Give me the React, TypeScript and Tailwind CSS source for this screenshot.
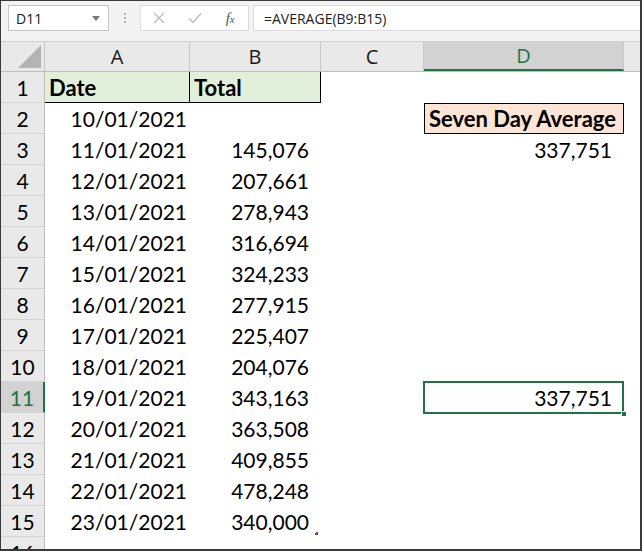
import React from "react";

const rows: { n: number; a: string; b: string; d?: string; dStyle?: "head" | "val" | "sel" }[] = [
  { n: 2, a: "10/01/2021", b: "", d: "Seven Day Average", dStyle: "head" },
  { n: 3, a: "11/01/2021", b: "145,076", d: "337,751", dStyle: "val" },
  { n: 4, a: "12/01/2021", b: "207,661" },
  { n: 5, a: "13/01/2021", b: "278,943" },
  { n: 6, a: "14/01/2021", b: "316,694" },
  { n: 7, a: "15/01/2021", b: "324,233" },
  { n: 8, a: "16/01/2021", b: "277,915" },
  { n: 9, a: "17/01/2021", b: "225,407" },
  { n: 10, a: "18/01/2021", b: "204,076" },
  { n: 11, a: "19/01/2021", b: "343,163", d: "337,751", dStyle: "sel" },
  { n: 12, a: "20/01/2021", b: "363,508" },
  { n: 13, a: "21/01/2021", b: "409,855" },
  { n: 14, a: "22/01/2021", b: "478,248" },
  { n: 15, a: "23/01/2021", b: "340,000" },
];

const cal = { fontFamily: "Lato, 'Noto Sans', sans-serif" };
const ui = { fontFamily: "'Open Sans', 'Noto Sans', sans-serif" };

function RowHead({ n, sel }: { n: number; sel?: boolean }) {
  return (
    <div
      className={
        "w-[44px] shrink-0 h-full flex items-center justify-center border-b border-[#d4d4d4] " +
        (sel
          ? "bg-[#d2d2d2] text-[#217346] border-r-2 border-r-[#217346]"
          : "bg-[#e9e9e9] text-black border-r border-r-[#bdbdbd]")
      }
    >
      <span className="text-[21px] leading-none" style={cal}>{n}</span>
    </div>
  );
}

export default function App() {
  return (
    <div className="w-[642px] h-[551px] bg-white border border-[#3a3a3a] border-r-2 border-b-2 overflow-hidden flex flex-col">
      {/* formula bar */}
      <div className="h-[41px] shrink-0 bg-[#f3f3f3] flex items-start pt-[4px] pl-[7px] border-b border-[#d0d0d0]">
        <div className="w-[101px] h-[26px] bg-white border border-[#c6c6c6] flex items-center justify-between pl-[7px] pr-[8px]">
          <span className="text-[14px] text-[#222]" style={ui}>D11</span>
          <svg width="8" height="5" viewBox="0 0 8 5"><path d="M0 0 L8 0 L4 5 Z" fill="#777" /></svg>
        </div>
        <div className="w-[31px] h-[26px] flex flex-col items-center justify-center gap-[2px]">
          <span className="w-[2px] h-[2px] bg-[#b0b0b0]" />
          <span className="w-[2px] h-[2px] bg-[#b0b0b0]" />
          <span className="w-[2px] h-[2px] bg-[#b0b0b0]" />
        </div>
        <div className="w-[109px] h-[26px] bg-white border border-[#dcdcdc] flex items-center">
          <div className="w-[36px] flex justify-center">
            <svg width="12" height="12" viewBox="0 0 12 12"><path d="M1 1 L11 11 M11 1 L1 11" stroke="#bdbdbd" strokeWidth="1.4" /></svg>
          </div>
          <div className="w-[36px] flex justify-center">
            <svg width="14" height="12" viewBox="0 0 14 12"><path d="M1 6.5 L5 10.5 L13 1.5" stroke="#bdbdbd" strokeWidth="1.5" fill="none" /></svg>
          </div>
          <div className="w-[36px] flex justify-center">
            <span className="text-[15px] italic text-[#555]" style={{ fontFamily: "'Liberation Serif', serif" }}>f<span className="text-[11px]">x</span></span>
          </div>
        </div>
        <div className="flex-1 h-[26px] ml-[4px] bg-white border border-[#dcdcdc] border-r-0 flex items-center pl-[10px]">
          <span className="text-[14px] text-[#222]" style={ui}>=AVERAGE(B9:B15)</span>
        </div>
      </div>

      {/* column header */}
      <div className="h-[30px] shrink-0 flex bg-[#e9e9e9] border-b border-[#bdbdbd]">
        <div className="w-[44px] shrink-0 border-r border-[#c8c8c8] flex items-end justify-end pr-[3px] pb-[3px]">
          <svg width="23" height="23" viewBox="0 0 23 23"><path d="M23 0 L23 23 L0 23 Z" fill="#b4b4b4" /></svg>
        </div>
        <div className="w-[145px] shrink-0 border-r border-[#c8c8c8] flex items-center justify-center text-[20px] text-[#1a1a1a]" style={ui}>A</div>
        <div className="w-[131px] shrink-0 border-r border-[#c8c8c8] flex items-center justify-center text-[20px] text-[#1a1a1a]" style={ui}>B</div>
        <div className="w-[103px] shrink-0 border-r border-[#c8c8c8] flex items-center justify-center text-[20px] text-[#1a1a1a]" style={ui}>C</div>
        <div className="w-[200px] shrink-0 bg-[#d2d2d2] border-r border-[#c8c8c8] border-b-2 border-b-[#217346] flex items-center justify-center text-[20px] text-[#217346]" style={ui}>D</div>
        <div className="flex-1" />
      </div>

      {/* row 1 */}
      <div className="h-[31px] shrink-0 flex">
        <RowHead n={1} />
        <div className="w-[145px] shrink-0 bg-[#e2efda] border-r border-b border-black flex items-center pl-[4px] text-[22px] font-bold text-black" style={cal}>Date</div>
        <div className="w-[131px] shrink-0 bg-[#e2efda] border-r border-b border-black flex items-center pl-[4px] text-[22px] font-bold text-black" style={cal}>Total</div>
        <div className="flex-1" />
      </div>

      {rows.map((r) => (
        <div key={r.n} className="h-[31px] shrink-0 flex">
          <RowHead n={r.n} sel={r.dStyle === "sel"} />
          <div className="w-[145px] shrink-0 flex items-center justify-end pr-[3px] text-[21px] text-black" style={cal}>{r.a}</div>
          <div className="w-[131px] shrink-0 flex items-center justify-end pr-[12px] text-[21px] text-black relative" style={cal}>
            {r.b}
            {r.n === 15 && (
              <span className="absolute right-[3px] bottom-[2px] w-[3px] h-[3px] border-r-2 border-b-2 border-[#5b4bb0]" />
            )}
          </div>
          <div className="w-[103px] shrink-0" />
          <div className="w-[200px] shrink-0 relative">
            {r.dStyle === "head" && (
              <div className="h-full bg-[#fce4d6] border border-black flex items-center pl-[4px] text-[22px] font-bold text-black" style={cal}>
                {r.d}
              </div>
            )}
            {r.dStyle === "val" && (
              <div className="h-full flex items-center justify-end pr-[12px] text-[21px] text-black" style={cal}>{r.d}</div>
            )}
            {r.dStyle === "sel" && (
              <>
                <div className="h-full flex items-center justify-end pr-[12px] text-[21px] text-black" style={cal}>{r.d}</div>
                <div className="absolute top-[-1px] left-[-1px] right-0 bottom-[-1px] border-2 border-[#217346]" />
                <div className="absolute right-[-3px] bottom-[-4px] w-[6px] h-[6px] bg-[#217346] border border-white" />
              </>
            )}
          </div>
          <div className="flex-1" />
        </div>
      ))}

      {/* row 16 partial */}
      <div className="h-[31px] shrink-0 flex">
        <RowHead n={16} />
        <div className="flex-1" />
      </div>
    </div>
  );
}
